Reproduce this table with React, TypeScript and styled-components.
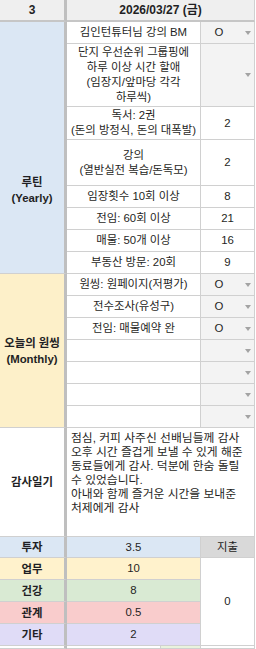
import { Fragment } from "react";
import styled, { createGlobalStyle } from "styled-components";

const GlobalStyle = createGlobalStyle`
  html, body { margin: 0; padding: 0; background: #fff; }
  body { font-family: "Liberation Sans", "Noto Sans CJK KR", sans-serif; }
`;

const grid = "#d0d0d0";

const tones = {
  plain: "#ffffff",
  head: "#efefef",
  blue: "#dbe7f4",
  yellow: "#fdf0c9",
  pick: "#f3f3f3",
  gray: "#d9d9d9",
  work: "#fff2cc",
  health: "#d9ead3",
  people: "#f9cccc",
  etc: "#e0dcf7",
};
type Tone = keyof typeof tones;

interface CellProps {
  $tone?: Tone;
  $col?: number;
  $cols?: number;
  $rows?: number;
  $open?: boolean;
}

const Sheet = styled.div`
  display: grid;
  width: 255px;
  height: 649px;
  overflow: hidden;
  grid-template-columns: 67px 134px 54px;
  grid-template-rows: 22px 22px 63px 33px 46px repeat(11, 22px) 109px 21px repeat(4, 22px) 3px;
  font-size: 11.4px;
  color: #1f1f24;
`;

const Cell = styled.div<CellProps>`
  box-sizing: border-box;
  grid-column: ${(p) => p.$col ?? 2} / span ${(p) => p.$cols ?? 1};
  grid-row: span ${(p) => p.$rows ?? 1};
  background: ${(p) => tones[p.$tone ?? "plain"]};
  border-right: 1px solid ${grid};
  border-bottom: ${(p) => (p.$open ? "none" : `1px solid ${grid}`)};
  display: flex;
  align-items: center;
  justify-content: center;
  text-align: center;
  line-height: 15px;
  overflow: hidden;
  white-space: nowrap;
`;

const Head = styled(Cell)`
  background: ${tones.head};
  font-weight: bold;
  font-size: 12px;
  border-bottom: 2px solid #c6c6c6;
  &:first-child {
    border-right: 3px solid #bfbfbf;
  }
`;

const Label = styled(Cell).attrs({ $col: 1 })`
  font-weight: bold;
  border-right: 3px solid #bfbfbf;
  line-height: 16px;
`;

const Task = styled(Cell)`
  white-space: normal;
`;

const Pick = styled(Cell).attrs({ $col: 3, $tone: "pick" as Tone })`
  justify-content: flex-start;
  padding-right: 3px;
`;

const PickValue = styled.span`
  flex: 1;
  text-align: center;
`;

const Caret = styled.span`
  width: 0;
  height: 0;
  margin-left: 8px;
  border-left: 3px solid transparent;
  border-right: 3px solid transparent;
  border-top: 4px solid #a3a3a3;
`;

const Count = styled(Cell).attrs({ $col: 3 })``;

const Diary = styled(Cell).attrs({ $col: 2, $cols: 2 })`
  align-items: flex-start;
  justify-content: flex-start;
  text-align: left;
  white-space: normal;
  word-break: keep-all;
  padding: 3px 4px;
  font-size: 11.8px;
  line-height: 14px;
`;

const Tail = styled(Cell)`
  background: linear-gradient(to right, #fff 93px, ${grid} 93px 94px, #e9f3de 94px);
`;

const routines: Array<{ task: string; count: string }> = [
  { task: "독서: 2권\n(돈의 방정식, 돈의 대폭발)", count: "2" },
  { task: "강의\n(열반실전 복습/돈독모)", count: "2" },
  { task: "임장횟수 10회 이상", count: "8" },
  { task: "전임: 60회 이상", count: "21" },
  { task: "매물: 50개 이상", count: "16" },
  { task: "부동산 방문: 20회", count: "9" },
];

const monthly = ["원씽: 원페이지(저평가)", "전수조사(유성구)", "전임: 매물예약 완", "", "", "", ""];

const spending: Array<{ name: string; value: string; tone: Tone }> = [
  { name: "업무", value: "10", tone: "work" },
  { name: "건강", value: "8", tone: "health" },
  { name: "관계", value: "0.5", tone: "people" },
  { name: "기타", value: "2", tone: "etc" },
];

const Lines = ({ text }: { text: string }) => (
  <span>
    {text.split("\n").map((l, i) => (
      <Fragment key={i}>
        {i > 0 && <br />}
        {l}
      </Fragment>
    ))}
  </span>
);

const PickBox = ({ value }: { value: string }) => (
  <Pick>
    <PickValue>{value}</PickValue>
    <Caret />
  </Pick>
);

export default function App() {
  return (
    <>
      <GlobalStyle />
      <Sheet>
        <Head $col={1}>3</Head>
        <Head $col={2} $cols={2}>2026/03/27 (금)</Head>

        <Label $tone="blue" $rows={2} $open />
        <Task>김인턴튜터님 강의 BM</Task>
        <PickBox value="O" />
        <Task>
          <Lines text={"단지 우선순위 그룹핑에\n하루 이상 시간 할애\n(임장지/앞마당 각각\n하루씩)"} />
        </Task>
        <PickBox value="" />

        <Label $tone="blue" $rows={6}>
          <Lines text={"루틴\n(Yearly)"} />
        </Label>
        {routines.map((r) => (
          <Fragment key={r.task}>
            <Task>
              <Lines text={r.task} />
            </Task>
            <Count>{r.count}</Count>
          </Fragment>
        ))}

        <Label $tone="yellow" $rows={7}>
          <Lines text={"오늘의 원씽\n(Monthly)"} />
        </Label>
        {monthly.map((m, i) => (
          <Fragment key={i}>
            <Task>{m}</Task>
            <PickBox value={i < 3 ? "O" : ""} />
          </Fragment>
        ))}

        <Label>감사일기</Label>
        <Diary>
          <span>
            점심, 커피 사주신 선배님들께 감사 오후 시간 즐겁게 보낼 수 있게 해준 동료들에게 감사. 덕분에 한숨 돌릴 수 있었습니다.
            <br />
            아내와 함께 즐거운 시간을 보내준 처제에게 감사
          </span>
        </Diary>

        <Label $tone="blue">투자</Label>
        <Task $tone="blue">3.5</Task>
        <Count $tone="gray">지출</Count>

        {spending.map((s, i) => (
          <Fragment key={s.name}>
            <Label $tone={s.tone}>{s.name}</Label>
            <Task $tone={s.tone}>{s.value}</Task>
            {i === 0 && <Count $rows={4}>0</Count>}
          </Fragment>
        ))}

        <Label />
        <Tail />
        <Count />
      </Sheet>
    </>
  );
}
